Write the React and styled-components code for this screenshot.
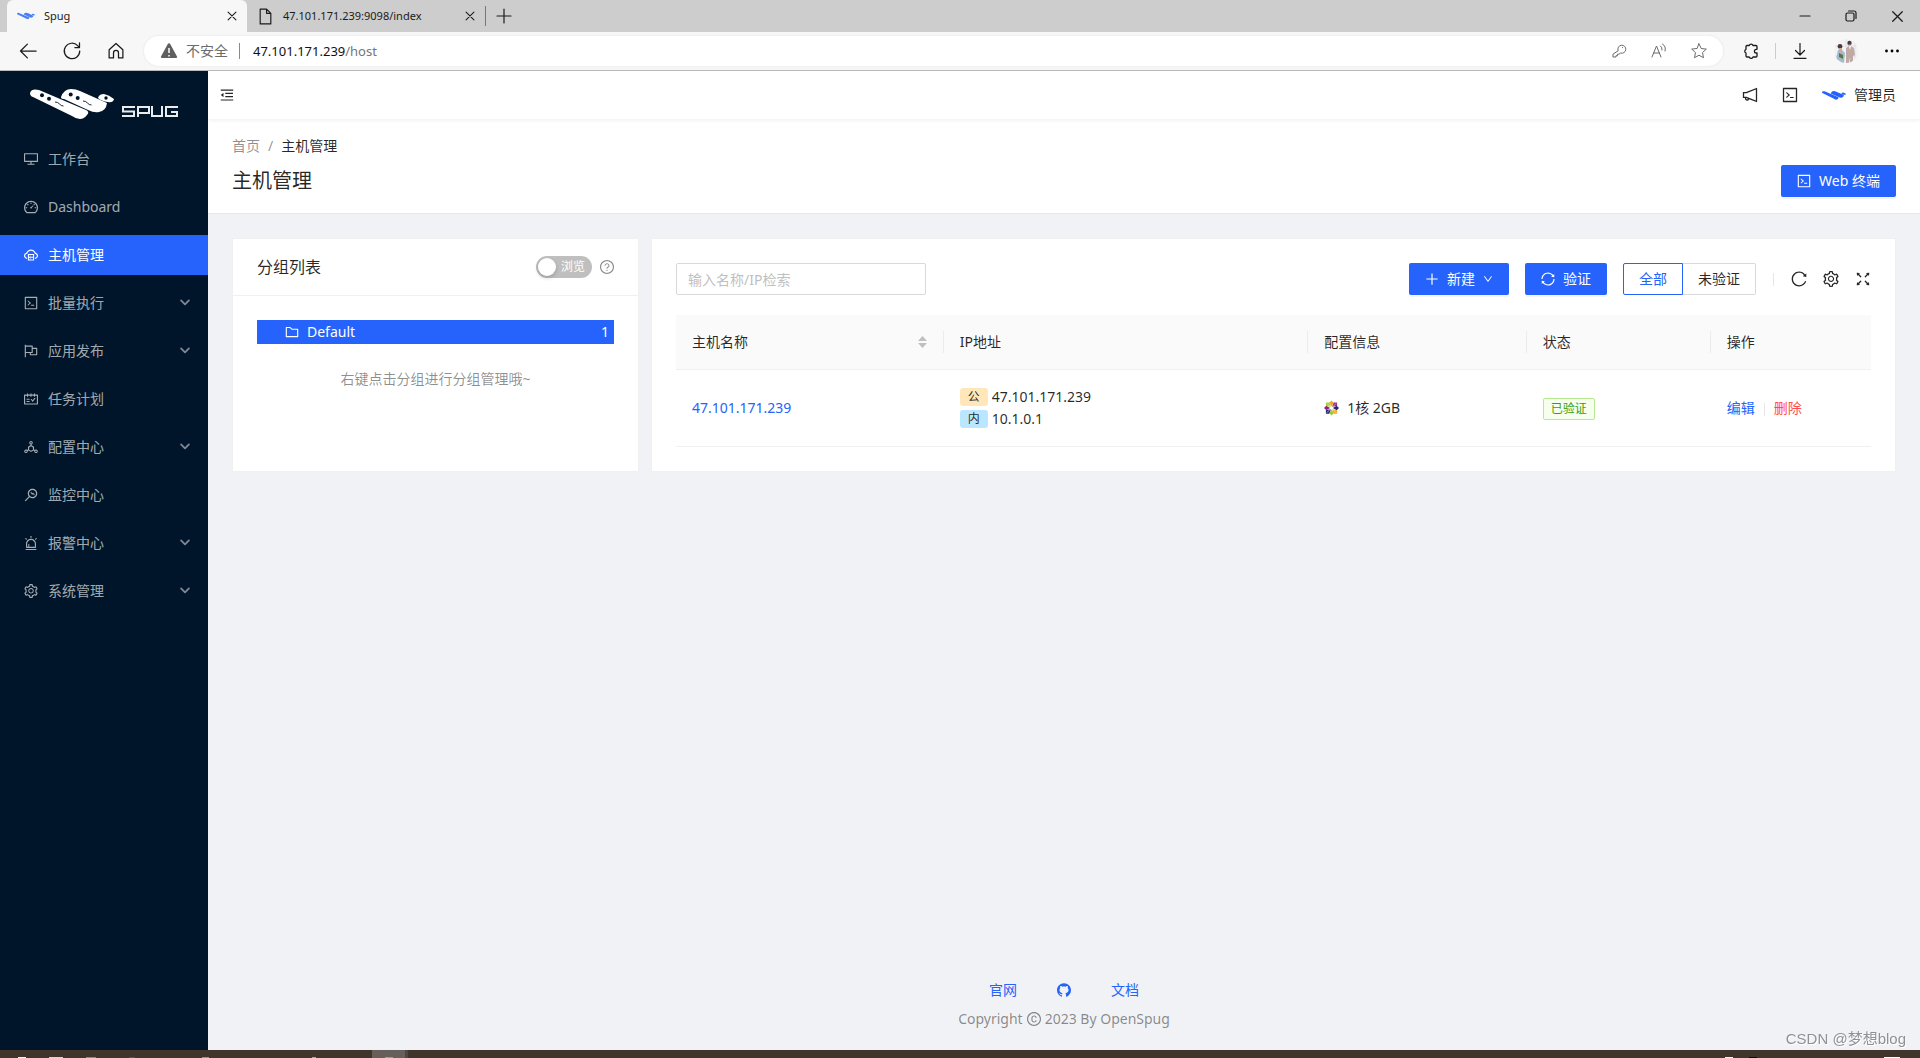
import React from "react";
import styled, { createGlobalStyle } from "styled-components";
import {
  AiOutlineDesktop, AiOutlineDashboard, AiOutlineCloudServer, AiOutlineCode, AiOutlineFlag,
  AiOutlineSchedule, AiOutlineDeploymentUnit, AiOutlineMonitor, AiOutlineAlert, AiOutlineSetting,
  AiOutlineReload, AiOutlineFullscreen, AiOutlineSync, AiOutlinePlus, AiOutlineDown,
  AiOutlineQuestionCircle, AiOutlineNotification, AiOutlineMenuFold, AiOutlineFolder,
  AiFillGithub, AiOutlineCopyright,
} from "react-icons/ai";

const BLUE = "#2563fc";

const GlobalStyle = createGlobalStyle`
  * { box-sizing: border-box; }
  body {
    margin: 0;
    color: rgba(0, 0, 0, 0.85);
    font: 14px/22px "Noto Sans", "Noto Sans CJK SC", sans-serif;
    background: #f0f2f5;
  }
  button, input { font: inherit; color: inherit; }
  button { padding: 0; border: 0; background: none; cursor: pointer; }
  a { color: ${BLUE}; text-decoration: none; }
  svg { display: block; flex: none; }
  h1, h2, p, ul { margin: 0; padding: 0; font-weight: 400; list-style: none; }
`;

const Screen = styled.div`
  display: flex;
  flex-direction: column;
  min-height: 100vh;
`;

/* Browser window */

const TabStrip = styled.div`
  display: flex;
  align-items: stretch;
  height: 32px;
  padding-left: 7px;
  background: #cdcdcd;
  color: #1b1b1b;
  font-size: 11px;
`;
const Tab = styled.div`
  display: flex;
  align-items: center;
  gap: 9px;
  width: ${(p) => (p.$active ? 240 : 238)}px;
  padding: 0 8px 0 10px;
  border-radius: 6px 6px 0 0;
  background: ${(p) => (p.$active ? "#f7f7f7" : "transparent")};
`;
const TabTitle = styled.span`
  flex: 1;
  white-space: nowrap;
`;
const NewTab = styled.button`
  display: flex;
  align-items: center;
  align-self: center;
  height: 20px;
  padding-left: 10px;
  border-left: 1px solid #777;
`;
const WindowButtons = styled.div`
  display: flex;
  align-items: center;
  gap: 30px;
  margin-left: auto;
  padding-right: 14px;
`;
const AddressBar = styled.div`
  display: flex;
  align-items: center;
  height: 39px;
  padding: 0 20px 0 18px;
  border-bottom: 1px solid #bcbcbc;
  background: #f7f7f7;
  color: #1b1b1b;
`;
const NavButtons = styled.div`
  display: flex;
  gap: 24px;
  margin-right: 18px;
`;
const UrlBox = styled.div`
  display: flex;
  align-items: center;
  flex: 1;
  height: 30px;
  padding: 0 16px;
  border-radius: 15px;
  background: #fff;
  box-shadow: 0 0 3px #e4e4e4;
  color: #6b6b6b;
`;
const UrlWarning = styled.span`
  margin-left: 8px;
  padding-right: 11px;
  border-right: 1px solid #8a8a8a;
  line-height: 16px;
`;
const Url = styled.span`
  flex: 1;
  margin-left: 13px;
  font-size: 13px;
  color: #767676;
  b { font-weight: 400; color: #111; }
`;
const UrlTools = styled.div`
  display: flex;
  gap: 24px;
`;
const BrowserTools = styled.div`
  display: flex;
  align-items: center;
  gap: 16px;
  margin-left: 20px;
`;
const ToolDivider = styled.span`
  width: 1px;
  height: 16px;
  background: #ccc;
`;
const ToolGroup = styled.div`
  display: flex;
  align-items: center;
  gap: 26px;
`;
const TaskBar = styled.div`
  display: flex;
  align-items: flex-end;
  height: 8px;
  background: #3f352b;
`;
const TaskIcon = styled.span`
  width: ${(p) => p.$width}px;
  height: 1px;
  margin-left: ${(p) => p.$gap}px;
  background: ${(p) => p.$color};
`;
const TaskActive = styled.span`
  display: flex;
  align-items: flex-end;
  justify-content: center;
  width: 36px;
  height: 8px;
  margin-left: 56px;
  border-right: 3px solid #50483f;
  background: #67605a;
`;
const Tray = styled.span`
  display: flex;
  align-items: flex-end;
  margin-left: auto;
  padding-right: 20px;
`;

/* Application shell */

const Shell = styled.div`
  display: flex;
  flex: 1;
`;
const Sider = styled.aside`
  flex: none;
  width: 208px;
  background: #001529;
`;
const Brand = styled.div`
  height: 64px;
  padding: 15px 0 0 28px;
`;
const Menu = styled.nav`
  display: flex;
  flex-direction: column;
  gap: 8px;
  padding-top: 4px;
`;
const MenuItem = styled.a`
  display: flex;
  align-items: center;
  gap: 10px;
  height: 40px;
  padding: 0 16px 0 24px;
  color: ${(p) => (p.$active ? "#fff" : "rgba(255, 255, 255, 0.65)")};
  background: ${(p) => (p.$active ? BLUE : "transparent")};
`;
const MenuLabel = styled.span`
  flex: 1;
`;
const MenuArrow = styled.span`
  color: rgba(255, 255, 255, 0.5);
`;
const Page = styled.div`
  display: flex;
  flex: 1;
  flex-direction: column;
  min-width: 0;
`;
const TopBar = styled.header`
  display: flex;
  align-items: center;
  height: 48px;
  padding: 0 24px 0 12px;
  background: #fff;
  box-shadow: 0 1px 4px rgba(0, 21, 41, 0.08);
  z-index: 1;
`;
const TopActions = styled.div`
  display: flex;
  align-items: center;
  gap: 24px;
  margin-left: auto;
`;
const User = styled.button`
  display: flex;
  align-items: center;
  gap: 8px;
`;
const PageHead = styled.div`
  display: flex;
  align-items: flex-end;
  justify-content: space-between;
  height: 95px;
  padding: 16px 24px;
  border-bottom: 1px solid #e6e7e9;
  background: #fff;
`;
const Crumbs = styled.nav`
  display: flex;
  gap: 8px;
  color: rgba(0, 0, 0, 0.45);
  a { color: inherit; }
  span:last-child { color: rgba(0, 0, 0, 0.85); }
`;
const PageTitle = styled.h1`
  margin-top: 8px;
  font-size: 20px;
  line-height: 32px;
`;
const Button = styled.button`
  display: flex;
  align-items: center;
  gap: 8px;
  height: 32px;
  padding: 0 16px;
  border-radius: 2px;
  background: ${BLUE};
  box-shadow: 0 2px 0 rgba(0, 0, 0, 0.04);
  color: #fff;
`;
const Content = styled.main`
  display: grid;
  grid-template-columns: calc(25% - 9px) 1fr;
  gap: 12px;
  padding: 24px;
`;
const Card = styled.section`
  border: 1px solid #f0f0f0;
  background: #fff;
`;
const CardHead = styled.div`
  display: flex;
  align-items: center;
  height: 57px;
  padding: 0 24px;
  border-bottom: 1px solid #f0f0f0;
  color: rgba(0, 0, 0, 0.45);
`;
const CardTitle = styled.h2`
  flex: 1;
  font-size: 16px;
  color: rgba(0, 0, 0, 0.85);
`;
const CardBody = styled.div`
  padding: 24px;
`;
const Switch = styled.label`
  display: flex;
  align-items: center;
  width: 56px;
  height: 22px;
  margin-right: 8px;
  padding: 0 7px 0 2px;
  border-radius: 11px;
  background: #bfbfbf;
  color: #fff;
  font-size: 12px;
  input {
    appearance: none;
    width: 18px;
    height: 18px;
    margin: 0 5px 0 0;
    border-radius: 9px;
    background: #fff;
    box-shadow: 0 2px 4px rgba(0, 35, 11, 0.2);
  }
`;
const TreeRow = styled.button`
  display: flex;
  align-items: center;
  gap: 8px;
  width: 100%;
  height: 24px;
  padding: 0 5px 0 28px;
  background: ${BLUE};
  color: #fff;
  text-align: left;
  span:last-child { margin-left: auto; }
`;
const Hint = styled.p`
  margin-top: 24px;
  text-align: center;
  color: rgba(0, 0, 0, 0.45);
`;
const Toolbar = styled.div`
  display: flex;
  align-items: center;
  gap: 16px;
  margin-bottom: 20px;
`;
const Search = styled.input`
  width: 250px;
  height: 32px;
  margin-right: auto;
  padding: 0 11px;
  border: 1px solid #d9d9d9;
  border-radius: 2px;
  outline: none;
  &::placeholder { color: #bfbfbf; }
`;
const Segments = styled.div`
  display: flex;
`;
const Segment = styled.button`
  height: 32px;
  padding: 0 15px;
  border: 1px solid ${(p) => (p.$active ? BLUE : "#d9d9d9")};
  border-left-width: ${(p) => (p.$active ? 1 : 0)}px;
  border-radius: ${(p) => (p.$active ? "2px 0 0 2px" : "0 2px 2px 0")};
  color: ${(p) => (p.$active ? BLUE : "inherit")};
`;
const TableTools = styled.div`
  display: flex;
  align-items: center;
  gap: 16px;
`;
const Divider = styled.span`
  display: inline-block;
  width: 1px;
  height: 13px;
  margin: 0 ${(p) => p.$gap}px;
  vertical-align: middle;
  background: #e6e6e6;
`;
const Table = styled.table`
  width: 100%;
  border-collapse: separate;
  border-spacing: 0;
  table-layout: fixed;
`;
const Th = styled.th`
  width: ${(p) => p.$width};
  height: 55px;
  padding: 0;
  border-bottom: 1px solid #f0f0f0;
  background: #fafafa;
  font-weight: 400;
  text-align: left;
`;
const ThInner = styled.div`
  display: flex;
  align-items: center;
  justify-content: space-between;
  height: 22px;
  padding: 0 16px;
  border-right: ${(p) => (p.$last ? 0 : 1)}px solid #ececec;
`;
const Td = styled.td`
  height: 77px;
  padding: 0 16px;
  border-bottom: 1px solid #f0f0f0;
`;
const Inline = styled.div`
  display: flex;
  align-items: center;
  gap: ${(p) => p.$gap}px;
`;
const NetTag = styled.span`
  width: 28px;
  height: 18px;
  border-radius: 3px;
  background: ${(p) => p.$color};
  font-size: 12px;
  line-height: 18px;
  text-align: center;
`;
const StatusTag = styled.span`
  display: inline-block;
  padding: 0 7px;
  border: 1px solid #b7eb8f;
  border-radius: 2px;
  background: #f6ffed;
  color: #389e0d;
  font-size: 12px;
  line-height: 20px;
`;
const Danger = styled.a`
  color: #ff4d4f;
`;
const Footer = styled.footer`
  display: flex;
  flex-direction: column;
  align-items: center;
  gap: 7px;
  margin-top: auto;
  padding-bottom: 20px;
  color: rgba(0, 0, 0, 0.45);
`;
const Watermark = styled.div`
  position: fixed;
  right: 14px;
  bottom: 8px;
  color: #8e9195;
  font: 15px/22px "Liberation Sans", "Noto Sans CJK SC", sans-serif;
  text-shadow: 1px 1px 0 #fff;
`;

/* Drawings */

/* Ant icons keep a 64-unit margin inside their 1024 grid; crop it off. */
const Ant = ({ as: Icon, size = 14 }) => <Icon size={size} viewBox="64 64 896 896" aria-hidden="true" />;

const Stroke = ({ size = 16, width = 1.2, children }) => (
  <svg width={size} height={size} viewBox="0 0 16 16" fill="none" stroke="currentColor"
    strokeWidth={width} strokeLinecap="round" strokeLinejoin="round" aria-hidden="true">
    {children}
  </svg>
);
const CloseIcon = ({ size = 14 }) => <Stroke size={size}><path d="M3.500 3.500l9 9M12.500 3.500l-9 9" /></Stroke>;

const Planes = ({ width, height, color, detail }) => (
  <svg width={width} height={height} viewBox="0 0 84 31" aria-hidden="true">
    <g fill={color}>
      <path d="M0 4C1 0 5 0 9 1L56 21Q60 23 57 26Q54 30 50 30Q46 30 42 27L3 8Q0 7 0 4Z" />
      <path d="M31 8Q34 0 41 0Q46 0 50 2L77 14Q76 22 69 23Q64 24 58 21L34 10Q31 10 31 8Z" />
      <path d="M68 9Q69 5 74 5Q79 6 84 10Q83 14 78 13Q71 12 68 9Z" />
    </g>
    {detail && (
      <>
        <g fill="#001529">
          <circle cx="12" cy="6.300" r="2" /><circle cx="19" cy="9.700" r="2" />
          <circle cx="40.700" cy="5.500" r="2" /><circle cx="47.700" cy="9" r="2" />
          <circle cx="76" cy="9" r="1.700" />
        </g>
        <path d="M25 13q3 0 4.500 2t4 2M53 12q3 0 4.500 2t4 2" fill="none" stroke="#001529" strokeWidth=".9" />
      </>
    )}
  </svg>
);

const BrandLogo = () => (
  <svg width="152" height="36" viewBox="0 0 152 36" role="img" aria-label="Spug">
    <svg x="2" y="3" width="84" height="31" viewBox="0 0 84 31"><Planes width={84} height={31} color="#fff" detail /></svg>
    <g fill="none" stroke="#e9ebed" strokeWidth="2">
      <path d="M107 21H95v4.500h11V30H94M110 31V21h11v6h-11M124 20v10h10V20M150 21h-12v9h11v-4h-6" />
    </g>
  </svg>
);

const CentosIcon = () => (
  <svg width="15" height="16" viewBox="0 0 16 16" aria-hidden="true">
    <path d="M8 0l2.500 2.500L8 6.500 5.500 2.500z" fill="#efa724" /><path d="M8 16l2.500-2.500L8 9.500l-2.500 4z" fill="#9ccd2a" />
    <path d="M0 8l2.500-2.500L6.500 8l-4 2.500z" fill="#932279" /><path d="M16 8l-2.500-2.500L9.500 8l4 2.500z" fill="#262577" />
    <path d="M2 2h3.500l2 5L2 5.500z" fill="#9ccd2a" /><path d="M14 14h-3.500l-2-5 5.500 1.500z" fill="#efa724" />
    <path d="M14 2h-3.500l-2 5L14 5.500z" fill="#932279" /><path d="M2 14h3.500l2-5L2 10.500z" fill="#262577" />
    <path d="M3 3l10 10M13 3L3 13" stroke="#fff" strokeWidth=".6" />
  </svg>
);

const Avatar = () => (
  <svg width="24" height="24" viewBox="0 0 24 24" role="img" aria-label="profile">
    <clipPath id="face"><circle cx="12" cy="12" r="12" /></clipPath>
    <g clipPath="url(#face)">
      <rect width="24" height="24" fill="#f4f2f5" />
      <path d="M0 7h24M0 17h24M12 0v8M21 0v24" stroke="#d9d6e0" strokeWidth=".6" />
      <path d="M4 11h4l3 3-1 10H3l-1-4z" fill="#a3bccb" />
      <circle cx="6" cy="7.500" r="2.400" fill="#4d3a36" />
      <path d="M5 9h3v4H5z" fill="#d9a78e" /><path d="M5 14l4 2v4l-4-2z" fill="#657248" />
      <circle cx="15.500" cy="4" r="2.200" fill="#493d40" />
      <path d="M14.500 5.500h2v2h-2z" fill="#d9a78e" />
      <path d="M12 9l3-2h2l3 2 1 7-2 1v7h-3l-.5-6-.5 6h-3v-8z" fill="#bfaaa6" />
      <path d="M15 7l1 4 1-4z" fill="#fff" />
    </g>
  </svg>
);

const Sorter = () => (
  <svg width="9" height="12" viewBox="0 0 9 12" fill="#bfbfbf" aria-hidden="true">
    <path d="M4.500 0L9 5H0zM4.500 12L9 7H0z" />
  </svg>
);

const MENU = [
  ["工作台", AiOutlineDesktop],
  ["Dashboard", AiOutlineDashboard],
  ["主机管理", AiOutlineCloudServer, { active: true }],
  ["批量执行", AiOutlineCode, { sub: true }],
  ["应用发布", AiOutlineFlag, { sub: true }],
  ["任务计划", AiOutlineSchedule],
  ["配置中心", AiOutlineDeploymentUnit, { sub: true }],
  ["监控中心", AiOutlineMonitor],
  ["报警中心", AiOutlineAlert, { sub: true }],
  ["系统管理", AiOutlineSetting, { sub: true }],
];

const COLUMNS = [
  ["主机名称", "22.4%"],
  ["IP地址", "30.5%"],
  ["配置信息", "18.3%"],
  ["状态", "15.4%"],
  ["操作", "13.4%"],
];

const BrowserChrome = () => (
  <>
    <TabStrip>
      <Tab $active>
        <Planes width={18} height={8} color="#4b80f5" />
        <TabTitle>Spug</TabTitle>
        <button aria-label="关闭标签页"><CloseIcon /></button>
      </Tab>
      <Tab>
        <Stroke size={17} width={1.1}><path d="M3 1h6l4 4v10H3zM9 1v4h4" /></Stroke>
        <TabTitle>47.101.171.239:9098/index</TabTitle>
        <button aria-label="关闭标签页"><CloseIcon /></button>
      </Tab>
      <NewTab aria-label="新建标签页"><Stroke><path d="M8 1v14M1 8h14" /></Stroke></NewTab>
      <WindowButtons>
        <button aria-label="最小化"><Stroke><path d="M3 8h10" /></Stroke></button>
        <button aria-label="还原"><Stroke><rect x="3" y="5" width="8" height="8" rx="1.500" /><path d="M5.500 3h5.500a2 2 0 0 1 2 2v5.500" /></Stroke></button>
        <button aria-label="关闭"><CloseIcon size={17} /></button>
      </WindowButtons>
    </TabStrip>
    <AddressBar>
      <NavButtons>
        <button aria-label="返回"><Stroke size={20} width={1}><path d="M14.500 8H2M7.500 2.500L2 8l5.500 5.500" /></Stroke></button>
        <button aria-label="刷新"><Stroke size={20} width={1}><path d="M14.200 8A6.200 6.200 0 1 1 12.500 3.700L14 5.200M14 1.500v3.700h-3.700" /></Stroke></button>
        <button aria-label="主页"><Stroke size={20} width={1}><path d="M2.500 7L8 2l5.500 5v6.500H10V9.500a2 2 0 0 0-4 0v4H2.500z" /></Stroke></button>
      </NavButtons>
      <UrlBox>
        <svg width="18" height="16" viewBox="0 0 18 16" aria-hidden="true">
          <path d="M7.800 1a1.400 1.400 0 0 1 2.400 0L17 13.500a1 1 0 0 1-1 1.500H2a1 1 0 0 1-1-1.500z" fill="#5f5f5f" />
          <path d="M9 5v5M9 12v1.500" stroke="#fff" strokeWidth="1.500" />
        </svg>
        <UrlWarning>不安全</UrlWarning>
        <Url><b>47.101.171.239</b>/host</Url>
        <UrlTools>
          <Stroke width={1}><path d="M7 7.500a4 4 0 1 1 2.500 2.500L8 11.200H6.500v1.500H5V14H2v-2.500zM11.500 4.500h.1" /></Stroke>
          <Stroke width={1}><path d="M1 14L5.500 3 10 14M2.500 10h6M9.500 3q2 1.500 1.500 4M11.500 1q4 2.500 2.500 7" /></Stroke>
          <Stroke width={1}><path d="M8 .8l2.200 4.700 5.100.6-3.800 3.500 1 5.100L8 12.200l-4.500 2.500 1-5.100L.7 6.100l5.100-.6z" /></Stroke>
        </UrlTools>
      </UrlBox>
      <BrowserTools>
        <Stroke width={1.3}>
          <path d="M4 2.500h2.200a2 2 0 0 1 3.800 0h3a1 1 0 0 1 1 1V6.300h-.7a1.800 1.800 0 0 0 0 3.700h.7v3a1 1 0 0 1-1 1h-3a2 2 0 0 1-3.800 0H4a1 1 0 0 1-1-1v-3a2 2 0 0 1 0-3.700V3.500a1 1 0 0 1 1-1z" />
        </Stroke>
        <ToolDivider />
        <ToolGroup>
          <Stroke><path d="M8 .5v11M3.500 7.500L8 12l4.500-4.500M2 15.300h12" /></Stroke>
          <Avatar />
          <svg width="16" height="16" viewBox="0 0 16 16" aria-hidden="true">
            <circle cx="2.500" cy="8" r="1.400" /><circle cx="8" cy="8" r="1.400" /><circle cx="13.500" cy="8" r="1.400" />
          </svg>
        </ToolGroup>
      </BrowserTools>
    </AddressBar>
  </>
);

const Sidebar = () => (
  <Sider>
    <Brand><BrandLogo /></Brand>
    <Menu>
      {MENU.map(([label, icon, opts = {}]) => (
        <MenuItem key={label} href="#" $active={opts.active}>
          <Ant as={icon} />
          <MenuLabel>{label}</MenuLabel>
          {opts.sub && <MenuArrow><Stroke size={14} width={2}><path d="M3.500 5L8 9.500 12.500 5" /></Stroke></MenuArrow>}
        </MenuItem>
      ))}
    </Menu>
  </Sider>
);

const GroupCard = () => (
  <Card>
    <CardHead>
      <CardTitle>分组列表</CardTitle>
      <Switch><input type="checkbox" role="switch" />浏览</Switch>
      <Ant as={AiOutlineQuestionCircle} />
    </CardHead>
    <CardBody>
      <TreeRow><Ant as={AiOutlineFolder} /><span>Default</span><span>1</span></TreeRow>
      <Hint>右键点击分组进行分组管理哦~</Hint>
    </CardBody>
  </Card>
);

const HostCard = () => (
  <Card>
    <CardBody>
      <Toolbar>
        <Search placeholder="输入名称/IP检索" aria-label="输入名称/IP检索" />
        <Button><Ant as={AiOutlinePlus} />新建<Ant as={AiOutlineDown} size={10} /></Button>
        <Button><Ant as={AiOutlineSync} />验证</Button>
        <Segments>
          <Segment $active>全部</Segment>
          <Segment>未验证</Segment>
        </Segments>
        <TableTools>
          <Divider $gap={1} />
          <button aria-label="刷新列表"><Ant as={AiOutlineReload} size={16} /></button>
          <button aria-label="列设置"><Ant as={AiOutlineSetting} size={16} /></button>
          <button aria-label="全屏"><Ant as={AiOutlineFullscreen} size={16} /></button>
        </TableTools>
      </Toolbar>
      <Table>
        <thead>
          <tr>
            {COLUMNS.map(([name, width], i) => (
              <Th key={name} $width={width}>
                <ThInner $last={i === COLUMNS.length - 1}>{name}{i === 0 && <Sorter />}</ThInner>
              </Th>
            ))}
          </tr>
        </thead>
        <tbody>
          <tr>
            <Td><a href="#">47.101.171.239</a></Td>
            <Td>
              <Inline $gap={4}><NetTag $color="#ffe7ba">公</NetTag>47.101.171.239</Inline>
              <Inline $gap={4}><NetTag $color="#bae7ff">内</NetTag>10.1.0.1</Inline>
            </Td>
            <Td><Inline $gap={8}><CentosIcon />1核 2GB</Inline></Td>
            <Td><StatusTag>已验证</StatusTag></Td>
            <Td><a href="#">编辑</a><Divider $gap={9} /><Danger href="#">删除</Danger></Td>
          </tr>
        </tbody>
      </Table>
    </CardBody>
  </Card>
);

export default function App() {
  return (
    <Screen>
      <GlobalStyle />
      <BrowserChrome />
      <Shell>
        <Sidebar />
        <Page>
          <TopBar>
            <button aria-label="收起菜单"><Ant as={AiOutlineMenuFold} /></button>
            <TopActions>
              <button aria-label="通知"><Ant as={AiOutlineNotification} size={16} /></button>
              <button aria-label="终端"><Ant as={AiOutlineCode} size={16} /></button>
              <User><Planes width={24} height={11} color={BLUE} />管理员</User>
            </TopActions>
          </TopBar>
          <PageHead>
            <div>
              <Crumbs><a href="#">首页</a><span>/</span><span>主机管理</span></Crumbs>
              <PageTitle>主机管理</PageTitle>
            </div>
            <Button><Ant as={AiOutlineCode} />Web 终端</Button>
          </PageHead>
          <Content>
            <GroupCard />
            <HostCard />
          </Content>
          <Footer>
            <Inline $gap={40}>
              <a href="#">官网</a>
              <a href="#" aria-label="GitHub"><Ant as={AiFillGithub} /></a>
              <a href="#">文档</a>
            </Inline>
            <Inline $gap={4}>Copyright <Ant as={AiOutlineCopyright} /> 2023 By OpenSpug</Inline>
          </Footer>
        </Page>
      </Shell>
      <TaskBar>
        <TaskIcon $gap={18} $width={8} $color="#f2f2f0" />
        <TaskIcon $gap={23} $width={14} $color="#d8d6cf" />
        <TaskIcon $gap={23} $width={10} $color="#8b8782" />
        <TaskIcon $gap={33} $width={6} $color="#8a4318" />
        <TaskIcon $gap={67} $width={7} $color="#f2714c" />
        <TaskIcon $gap={103} $width={4} $color="#e89a3c" />
        <TaskActive><TaskIcon $gap={0} $width={8} $color="#36c3d8" /></TaskActive>
        <Tray>
          <TaskIcon $gap={0} $width={8} $color="#f5f5f5" />
          <TaskIcon $gap={16} $width={8} $color="#0d0b09" />
          <TaskIcon $gap={127} $width={16} $color="#ffffff" />
        </Tray>
      </TaskBar>
      <Watermark>CSDN @梦想blog</Watermark>
    </Screen>
  );
}
